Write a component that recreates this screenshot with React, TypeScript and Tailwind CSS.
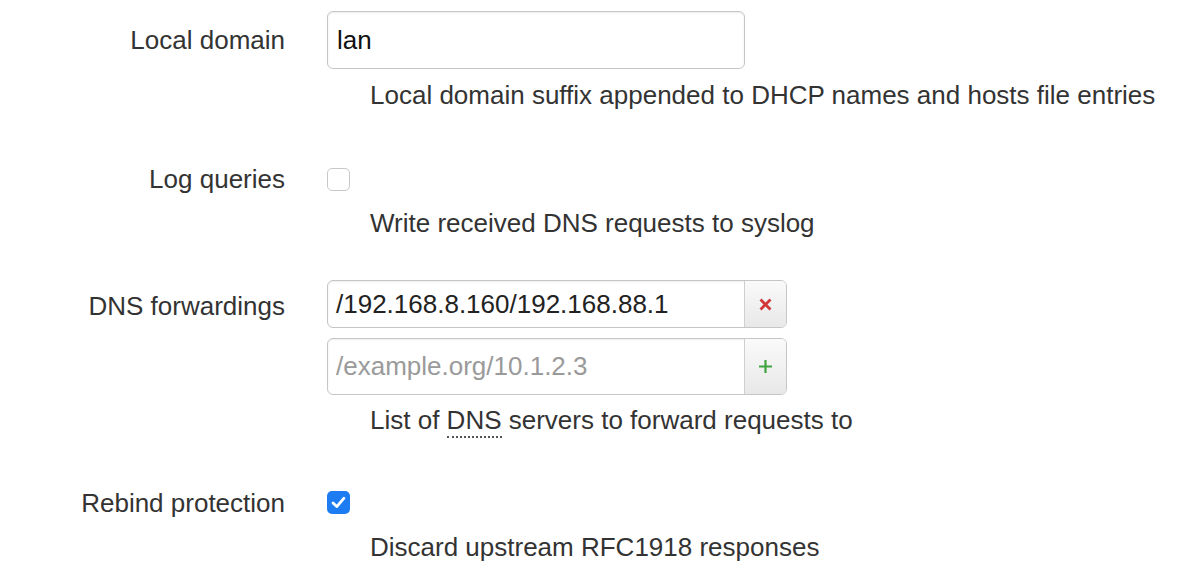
import React from "react";

const font = { fontFamily: '"Liberation Sans", Arial, sans-serif' };

function Label({ text, h }: { text: string; h: string }) {
  return (
    <div className={`w-[285px] shrink-0 flex items-center justify-end text-[26px] text-[#333] ${h}`}>
      {text}
    </div>
  );
}

function Desc({ children, mt }: { children: React.ReactNode; mt: string }) {
  return (
    <div className={`pl-[43px] text-[26px] leading-[28px] text-[#333] whitespace-nowrap ${mt}`}>{children}</div>
  );
}

function Check({ checked }: { checked?: boolean }) {
  if (checked) {
    return (
      <div className="w-[23px] h-[23px] rounded-[5px] bg-[#1d7cf2] flex items-center justify-center">
        <svg width="15" height="13" viewBox="0 0 15 13" fill="none">
          <path d="M2 7 L5.8 10.6 L13 2.2" stroke="white" strokeWidth="2.8" strokeLinecap="round" strokeLinejoin="round" />
        </svg>
      </div>
    );
  }
  return <div className="w-[23px] h-[23px] rounded-[5px] border border-[#c8c8c8] bg-white" />;
}

function Group({ value, placeholder, add, h }: { value?: string; placeholder?: string; add?: boolean; h: string }) {
  return (
    <div className={`flex w-[460px] ${h} rounded-[6px] border border-[#c6c6c6] shadow-[inset_0_1px_2px_rgba(0,0,0,0.08)] overflow-hidden`}>
      <div className={`flex-1 flex items-center pl-[8px] text-[26px] ${value ? "text-[#222]" : "text-[#9a9a9a]"}`}>
        {value ?? placeholder}
      </div>
      <div className="w-[42px] border-l border-[#cfcfcf] bg-gradient-to-b from-[#fafafa] to-[#e8e8e8] flex items-center justify-center">
        {add ? (
          <svg width="15" height="15" viewBox="0 0 15 15">
            <path d="M7.5 1 V14 M1 7.5 H14" stroke="#3fa33f" strokeWidth="2.2" />
          </svg>
        ) : (
          <svg width="13" height="13" viewBox="0 0 13 13">
            <path d="M1.5 1.5 L11.5 11.5 M11.5 1.5 L1.5 11.5" stroke="#d0383a" strokeWidth="2.8" />
          </svg>
        )}
      </div>
    </div>
  );
}

export default function App() {
  return (
    <div className="w-[1184px] h-[578px] bg-white overflow-hidden" style={font}>
      {/* Local domain */}
      <div className="pt-[11px]">
        <div className="flex">
          <Label text="Local domain" h="h-[58px]" />
          <div className="ml-[42px] w-[418px] h-[58px] rounded-[6px] border border-[#c6c6c6] shadow-[inset_0_1px_2px_rgba(0,0,0,0.08)] flex items-center pl-[9px] text-[26px] text-[#111]">
            lan
          </div>
        </div>
        <div className="ml-[327px]">
          <Desc mt="mt-[12px]">Local domain suffix appended to DHCP names and hosts file entries</Desc>
        </div>
      </div>

      {/* Log queries */}
      <div className="mt-[59px]">
        <div className="flex">
          <Label text="Log queries" h="h-[23px]" />
          <div className="ml-[42px]">
            <Check />
          </div>
        </div>
        <div className="ml-[327px]">
          <Desc mt="mt-[18px]">Write received DNS requests to syslog</Desc>
        </div>
      </div>

      {/* DNS forwardings */}
      <div className="mt-[43px]">
        <div className="flex">
          <Label text="DNS forwardings" h="h-[52px]" />
          <div className="ml-[42px] flex flex-col gap-[10px]">
            <Group value="/192.168.8.160/192.168.88.1" h="h-[48px]" />
            <Group placeholder="/example.org/10.1.2.3" add h="h-[57px]" />
          </div>
        </div>
        <div className="ml-[327px]">
          <Desc mt="mt-[11px]">
            List of{" "}
            <span className="border-b-2 border-dotted border-[#555] pb-[1px]">DNS</span> servers to forward requests to
          </Desc>
        </div>
      </div>

      {/* Rebind protection */}
      <div className="mt-[57px]">
        <div className="flex">
          <Label text="Rebind protection" h="h-[25px]" />
          <div className="ml-[42px]">
            <Check checked />
          </div>
        </div>
        <div className="ml-[327px]">
          <Desc mt="mt-[17px]">Discard upstream RFC1918 responses</Desc>
        </div>
      </div>
    </div>
  );
}
